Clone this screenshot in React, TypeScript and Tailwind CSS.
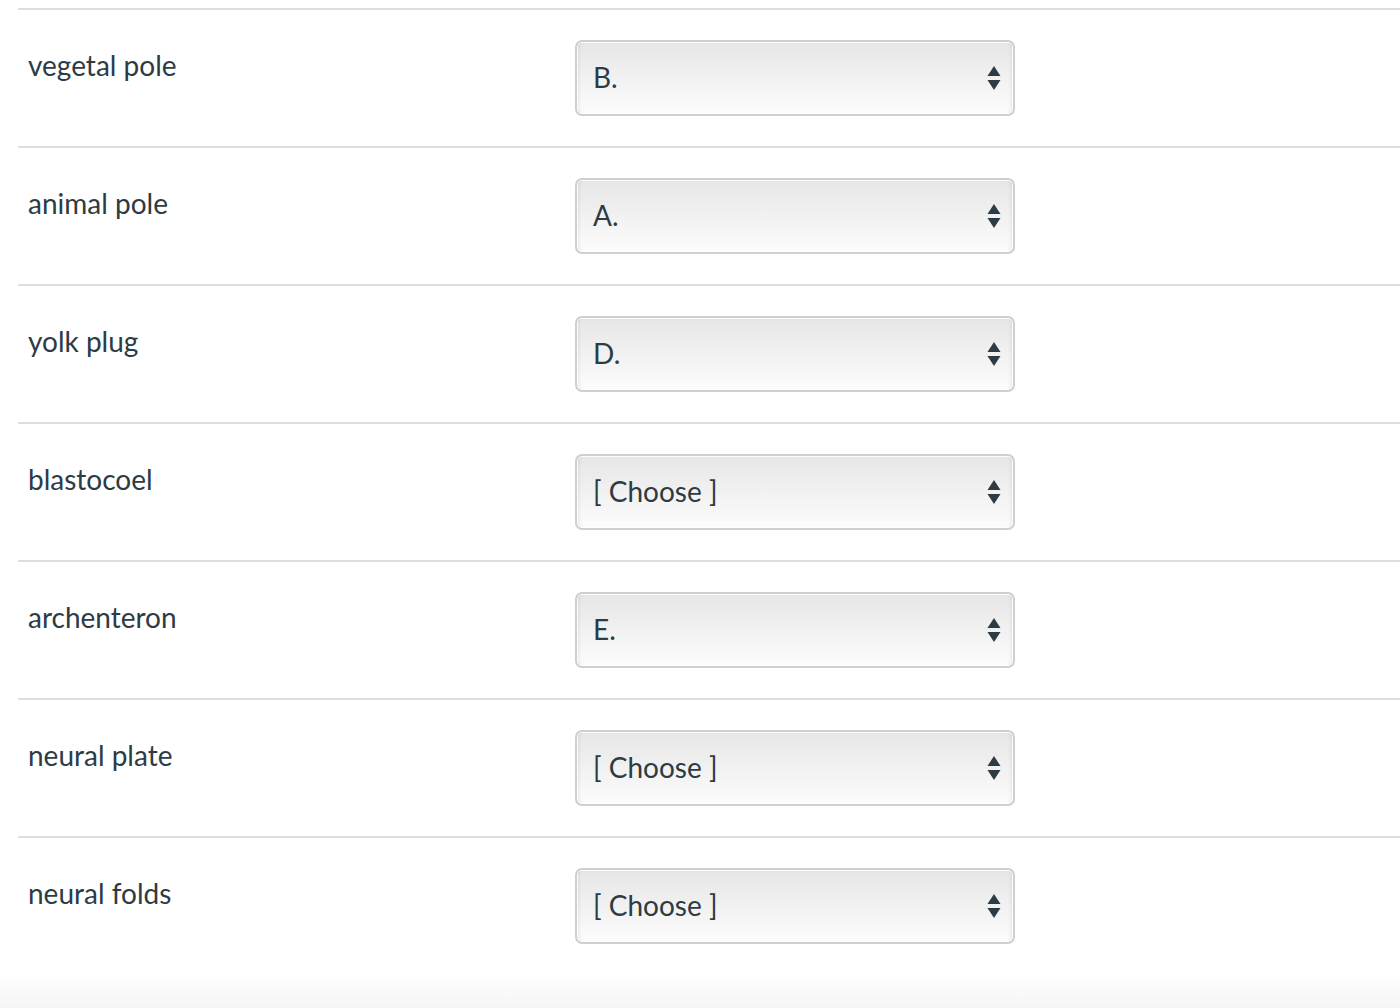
import React from "react";

const rows: [string, string][] = [
  ["vegetal pole", "B."],
  ["animal pole", "A."],
  ["yolk plug", "D."],
  ["blastocoel", "[ Choose ]"],
  ["archenteron", "E."],
  ["neural plate", "[ Choose ]"],
  ["neural folds", "[ Choose ]"],
];

function Arrows() {
  return (
    <svg width="14" height="26" viewBox="0 0 14 26" className="block">
      <polygon points="7,1 13.5,11 0.5,11" fill="#2d3b45" />
      <polygon points="0.5,15 13.5,15 7,25" fill="#2d3b45" />
    </svg>
  );
}

export default function App() {
  return (
    <div
      className="min-h-[1008px] flex flex-col bg-white text-[#2d3b45]"
      style={{ fontFamily: "Lato, 'Noto Sans', sans-serif" }}
    >
      <div className="pt-[8px] ml-[18px]">
        {rows.map(([label, value], i) => (
          <div
            key={i}
            className="flex items-start border-t-2 border-[#dddddd] pt-[30px] pb-[30px]"
          >
            <div className="w-[557px] pl-[10px] pt-[8px] text-[28px] leading-[34px]">{label}</div>
            <div className="w-[440px] h-[76px] rounded-[7px] border-2 border-[#cfcfcf] bg-[linear-gradient(#e6e6e6,#fcfcfc)] shadow-[inset_0_0_0_1px_rgba(255,255,255,0.9),inset_4px_0_4px_-3px_rgba(0,0,0,0.12),inset_-4px_0_4px_-3px_rgba(0,0,0,0.12)] flex items-center pl-[16px] pr-[12px]">
              <span className="flex-1 text-[28px] leading-[34px] -mt-[2px]">{value}</span>
              <Arrows />
            </div>
          </div>
        ))}
      </div>
      <div className="flex-1 bg-[linear-gradient(#ffffff,#f5f5f5)]" />
    </div>
  );
}
